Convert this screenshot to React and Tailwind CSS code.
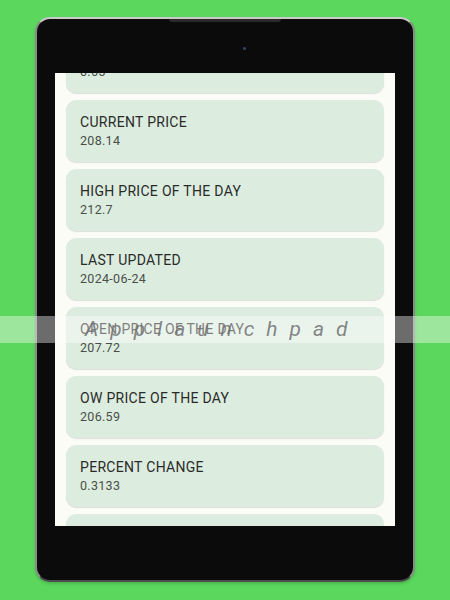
const items = [
  { title: "CHANGE", value: "0.65" },
  { title: "CURRENT PRICE", value: "208.14" },
  { title: "HIGH PRICE OF THE DAY", value: "212.7" },
  { title: "LAST UPDATED", value: "2024-06-24" },
  { title: "OPEN PRICE OF THE DAY", value: "207.72" },
  { title: "OW PRICE OF THE DAY", value: "206.59" },
  { title: "PERCENT CHANGE", value: "0.3133" },
  { title: "PREVIOUS CLOSE", value: "207.49" },
];

const StatCard = ({ title, value }) => (
  <div className="h-[62px] shrink-0 rounded-[10px] bg-[#dcede0] px-[14px] pt-[12px] shadow-[0_1px_1px_rgba(0,0,0,0.12)]">
    <div className="text-[14px] leading-[20px] tracking-[0.3px] text-[#2a2b29]">{title}</div>
    <div className="text-[12.5px] leading-[18px] tracking-[0.3px] text-[#4a4e48]">{value}</div>
  </div>
);

export default function App() {
  return (
    <div
      className="relative h-[600px] w-[450px] overflow-hidden bg-[#5ad75c]"
      style={{ fontFamily: "Roboto, 'Liberation Sans', sans-serif" }}
    >
      <div className="ml-[35px] mt-[17px] h-[565px] w-[380px] rounded-[15px] border-2 border-t-[#c9c9c9] border-x-[#8a8a8a] border-b-[#4d4d4d] bg-[#0b0b0b] px-[18px] pt-[54px] shadow-[0_2px_3px_rgba(0,0,0,0.15)]">
        <div className="relative -mt-[54px] flex h-[54px] justify-center">
          <div className="h-[3px] w-[112px] rounded-b-[3px] bg-[#2a2a2a]" />
          <div className="absolute left-[188px] top-[28px] h-[3px] w-[3px] rounded-full bg-[#3a4568]" />
        </div>
        <div className="h-[453px] w-[340px] overflow-hidden bg-[#fbfcf6] px-[11px]">
          <div className="-mt-[42px] flex flex-col gap-[7px]">
            {items.map((it) => (
              <StatCard key={it.title} title={it.title} value={it.value} />
            ))}
          </div>
        </div>
      </div>
      <div className="absolute left-0 top-[316px] flex h-[27px] w-[450px] items-center bg-white/40 pl-[85px]">
        <span className="text-[21px] italic tracking-[12px] text-[#707070]/85">Applaunchpad</span>
      </div>
    </div>
  );
}
